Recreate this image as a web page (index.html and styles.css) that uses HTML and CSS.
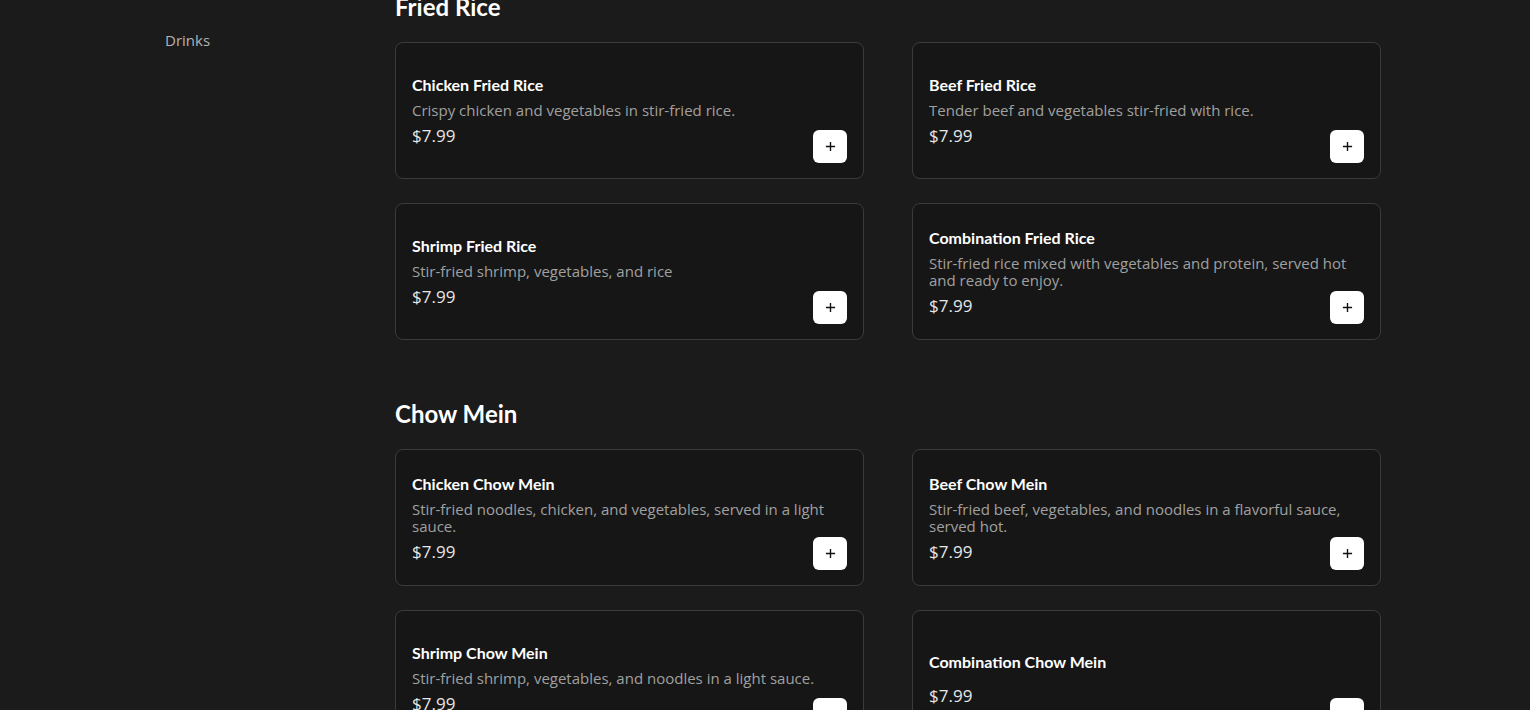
FILE: index.html
```html
<!DOCTYPE html>
<html lang="en">
<head>
    <meta charset="UTF-8">
    <title>Menu</title>
    <link rel="stylesheet" href="styles.css">
</head>
<body>
<div class="page">
    <!-- category list on the left -->
    <aside class="sidebar">
        <a class="side-link" href="#">Drinks</a>
    </aside>

    <main class="menu">
        <section class="section">
            <h2 class="section-title">Fried Rice</h2>
            <div class="grid">
                <div class="card">
                    <div class="info">
                        <h3 class="name">Chicken Fried Rice</h3>
                        <p class="desc">Crispy chicken and vegetables in stir-fried rice.</p>
                        <p class="price">$7.99</p>
                    </div>
                    <button class="add"><svg viewBox="0 0 12 12" width="11" height="11"><path d="M6 1v10M1 6h10" stroke="#111" stroke-width="1.5"/></svg></button>
                </div>
                <div class="card">
                    <div class="info">
                        <h3 class="name">Beef Fried Rice</h3>
                        <p class="desc">Tender beef and vegetables stir-fried with rice.</p>
                        <p class="price">$7.99</p>
                    </div>
                    <button class="add"><svg viewBox="0 0 12 12" width="11" height="11"><path d="M6 1v10M1 6h10" stroke="#111" stroke-width="1.5"/></svg></button>
                </div>
                <div class="card">
                    <div class="info">
                        <h3 class="name">Shrimp Fried Rice</h3>
                        <p class="desc">Stir-fried shrimp, vegetables, and rice</p>
                        <p class="price">$7.99</p>
                    </div>
                    <button class="add"><svg viewBox="0 0 12 12" width="11" height="11"><path d="M6 1v10M1 6h10" stroke="#111" stroke-width="1.5"/></svg></button>
                </div>
                <div class="card">
                    <div class="info">
                        <h3 class="name">Combination Fried Rice</h3>
                        <p class="desc">Stir-fried rice mixed with vegetables and protein, served hot and ready to enjoy.</p>
                        <p class="price">$7.99</p>
                    </div>
                    <button class="add"><svg viewBox="0 0 12 12" width="11" height="11"><path d="M6 1v10M1 6h10" stroke="#111" stroke-width="1.5"/></svg></button>
                </div>
            </div>
        </section>

        <section class="section">
            <h2 class="section-title">Chow Mein</h2>
            <div class="grid">
                <div class="card">
                    <div class="info">
                        <h3 class="name">Chicken Chow Mein</h3>
                        <p class="desc">Stir-fried noodles, chicken, and vegetables, served in a light sauce.</p>
                        <p class="price">$7.99</p>
                    </div>
                    <button class="add"><svg viewBox="0 0 12 12" width="11" height="11"><path d="M6 1v10M1 6h10" stroke="#111" stroke-width="1.5"/></svg></button>
                </div>
                <div class="card">
                    <div class="info">
                        <h3 class="name">Beef Chow Mein</h3>
                        <p class="desc">Stir-fried beef, vegetables, and noodles in a flavorful sauce, served hot.</p>
                        <p class="price">$7.99</p>
                    </div>
                    <button class="add"><svg viewBox="0 0 12 12" width="11" height="11"><path d="M6 1v10M1 6h10" stroke="#111" stroke-width="1.5"/></svg></button>
                </div>
                <div class="card">
                    <div class="info">
                        <h3 class="name">Shrimp Chow Mein</h3>
                        <p class="desc">Stir-fried shrimp, vegetables, and noodles in a light sauce.</p>
                        <p class="price">$7.99</p>
                    </div>
                    <button class="add"><svg viewBox="0 0 12 12" width="11" height="11"><path d="M6 1v10M1 6h10" stroke="#111" stroke-width="1.5"/></svg></button>
                </div>
                <div class="card">
                    <div class="info">
                        <h3 class="name">Combination Chow Mein</h3>
                        <p class="desc"></p>
                        <p class="price">$7.99</p>
                    </div>
                    <button class="add"><svg viewBox="0 0 12 12" width="11" height="11"><path d="M6 1v10M1 6h10" stroke="#111" stroke-width="1.5"/></svg></button>
                </div>
            </div>
        </section>
    </main>
</div>
</body>
</html>
```

FILE: styles.css
```css
html, body {
    margin: 0;
    padding: 0;
    background: #1b1b1b;
    overflow: hidden;
}

.page {
    display: flex;
    padding-left: 165px;
    font-family: "Open Sans", "DejaVu Sans", sans-serif;
    color: #fff;
}

.sidebar {
    width: 230px;
    flex-shrink: 0;
    padding-top: 29px;
}

.side-link {
    font-size: 15px;
    line-height: 20px;
    color: #b3b3b3;
    text-decoration: none;
}

.menu {
    width: 986px;
    margin-top: -9px;
}

.section {
    margin-bottom: 58px;
}

.section-title {
    font-family: "Lato", sans-serif;
    font-weight: 700;
    font-size: 24px;
    line-height: 32px;
    margin: 0 0 19px 0;
    color: #fff;
}

.grid {
    display: grid;
    grid-template-columns: 1fr 1fr;
    column-gap: 48px;
    row-gap: 24px;
}

.card {
    position: relative;
    display: flex;
    align-items: center;
    min-height: 137px;
    box-sizing: border-box;
    padding: 0 16px;
    background: #161616;
    border: 1px solid #3b3b3b;
    border-radius: 8px;
}

.info {
    width: 100%;
    display: flex;
    flex-direction: column;
    gap: 5px;
}

.name {
    font-family: "Lato", sans-serif;
    font-weight: 700;
    font-size: 16px;
    line-height: 24px;
    margin: 0;
    color: #fff;
}

.desc {
    font-size: 15px;
    line-height: 17px;
    margin: 0;
    color: #a0a0a0;
}

.price {
    font-size: 17px;
    line-height: 24px;
    margin: 0;
    color: #e6e6e6;
}

/* plus button sits over the card corner */
.add {
    position: absolute;
    right: 16px;
    bottom: 15px;
    width: 34px;
    height: 33px;
    display: flex;
    align-items: center;
    justify-content: center;
    padding: 0;
    background: #fff;
    border: none;
    border-radius: 6px;
}
```
